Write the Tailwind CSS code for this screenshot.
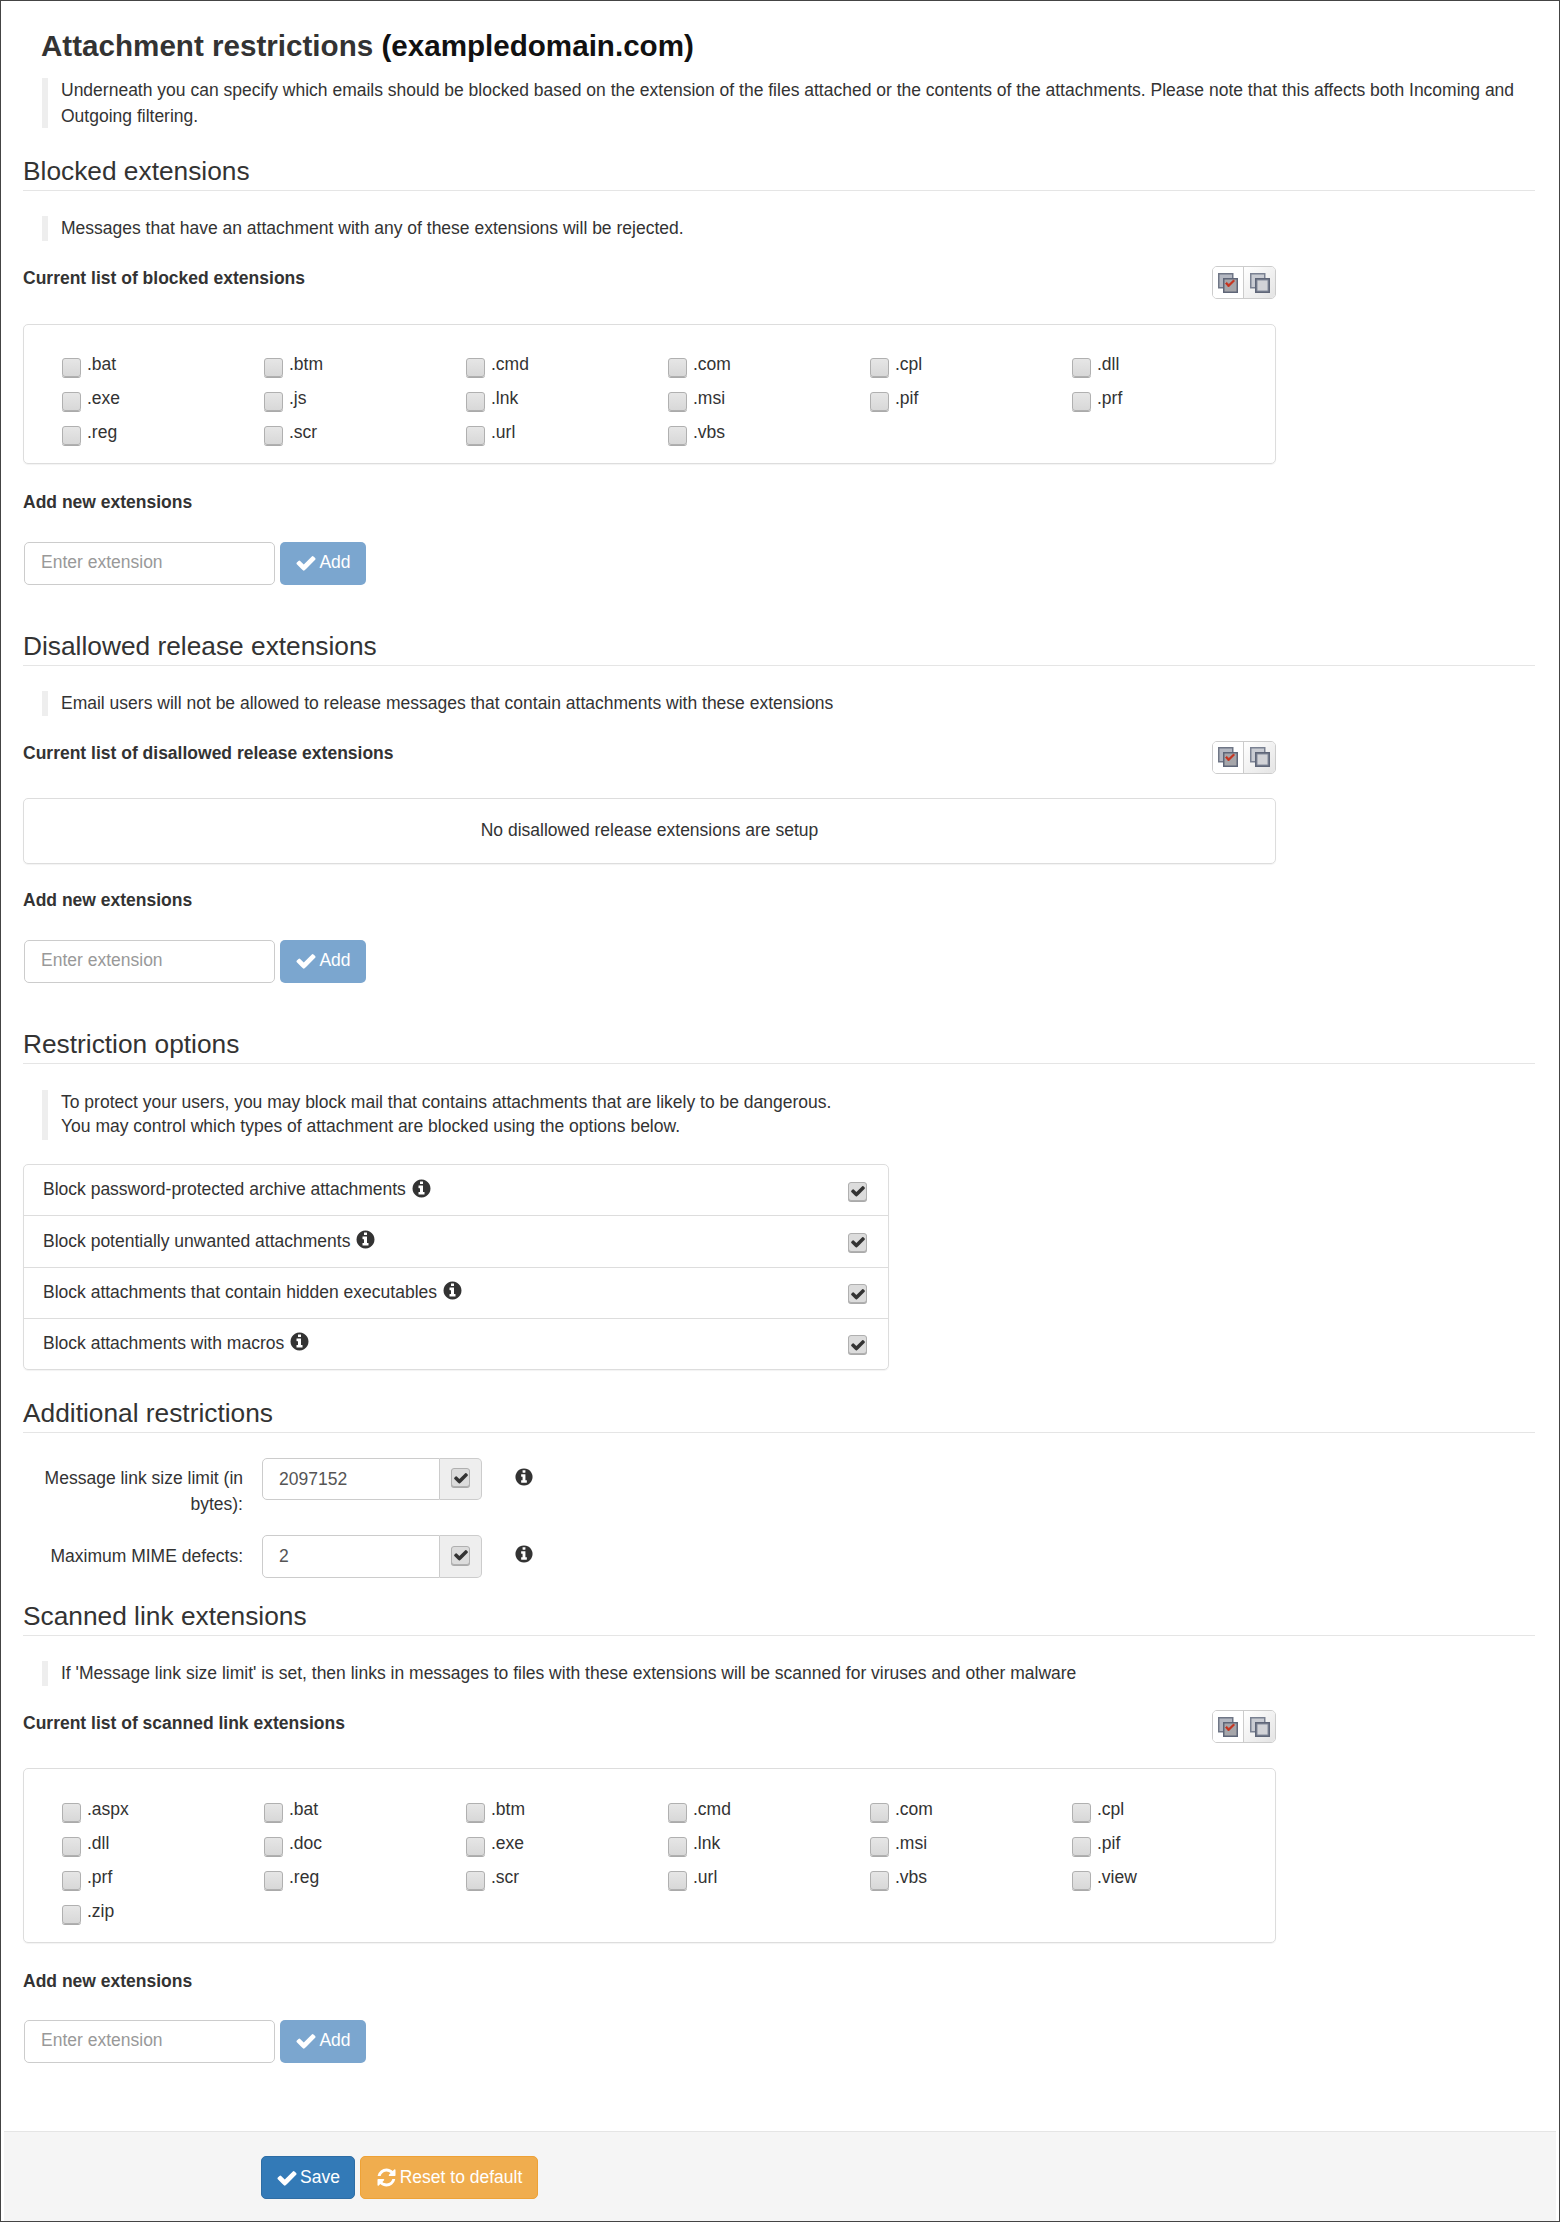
<!DOCTYPE html>
<html lang="en">
<head>
  <meta charset="UTF-8" />
  <title>Attachment restrictions</title>
  <script src="https://cdn.jsdelivr.net/npm/@tailwindcss/browser@4"></script>
</head>
<body class="bg-white">
  <div class="w-[1560px] h-[2222px] border border-[#444] flex flex-col font-['Liberation_Sans',Arial,sans-serif] text-[17.5px] leading-[25.5px] text-[#333]">
    <svg class="hidden">
      <symbol id="check" viewBox="0 0 1792 1792"><path fill="currentColor" d="M1671 566q0 40-28 68l-724 724-136 136q-28 28-68 28t-68-28l-136-136-362-362q-28-28-28-68t28-68l136-136q28-28 68-28t68 28l294 295 656-657q28-28 68-28t68 28l136 136q28 28 28 68z"/></symbol>
      <symbol id="info" viewBox="0 0 1792 1792"><path fill="currentColor" d="M1152 1376v-160q0-14-9-23t-23-9h-96v-512q0-14-9-23t-23-9h-320q-14 0-23 9t-9 23v160q0 14 9 23t23 9h96v320h-96q-14 0-23 9t-9 23v160q0 14 9 23t23 9h448q14 0 23-9t9-23zm-128-896v-160q0-14-9-23t-23-9h-192q-14 0-23 9t-9 23v160q0 14 9 23t23 9h192q14 0 23-9t9-23zm640 416q0 209-103 385.5t-279.5 279.5-385.5 103-385.5-103-279.5-279.5-103-385.5 103-385.5 279.5-279.5 385.5-103 385.5 103 279.5 279.5 103 385.5z"/></symbol>
      <symbol id="refresh" viewBox="0 0 1792 1792"><path fill="currentColor" d="M1639 1056q0 5-1 7-64 268-268 434.5t-478 166.5q-146 0-282.5-55t-243.5-157l-129 129q-19 19-45 19t-45-19-19-45v-448q0-26 19-45t45-19h448q26 0 45 19t19 45-19 45l-137 137q71 66 161 102t187 36q134 0 250-65t186-179q11-17 53-117 8-23 30-23h192q13 0 22.5 9.5t9.5 22.5zm25-800v448q0 26-19 45t-45 19h-448q-26 0-45-19t-19-45 19-45l138-138q-148-137-349-137-134 0-250 65t-186 179q-11 17-53 117-8 23-30 23h-199q-13 0-22.5-9.5t-9.5-22.5v-7q65-268 270-434.5t480-166.5q146 0 284 55.5t245 156.5l130-129q19-19 45-19t45 19 19 45z"/></symbol>
      <symbol id="select-all" viewBox="0 0 20 20">
        <rect x="0.75" y="0.75" width="14" height="14" fill="#b4b8c2" stroke="#6f7686" stroke-width="1.5"/>
        <rect x="5.75" y="5.75" width="13.5" height="13.5" fill="#a6a6aa" stroke="#5f6678" stroke-width="1.5"/>
        <path d="M7.5 10.5l3 3.5 6-6-1-1-4.6 4.4-2.2-2z" fill="#c8301a" stroke="#c8301a" stroke-width="0.8"/>
      </symbol>
      <symbol id="select-none" viewBox="0 0 20 20">
        <rect x="0.75" y="0.75" width="14" height="14" fill="#c9ccd3" stroke="#7a8192" stroke-width="1.5"/>
        <rect x="5.75" y="5.75" width="13.5" height="13.5" fill="#868d9d" stroke="#5f6678" stroke-width="1.5"/>
        <rect x="7.5" y="7.5" width="10" height="10" fill="#d2d3d7"/>
      </symbol>
    </svg>

    <div class="pl-[40px] pt-[25px] h-[40px] box-content text-[29.6px] leading-[40px] font-bold text-[#333]">Attachment restrictions <span class="text-[#111]">(exampledomain.com)</span></div>

    <div class="ml-[41px] mt-[12px] h-[50px] w-[1490px] border-l-[6px] border-[#eee] pl-[13px]">Underneath you can specify which emails should be blocked based on the extension of the files attached or the contents of the attachments. Please note that this affects both Incoming and Outgoing filtering.</div>

    <div class="ml-[22px] mt-[20px] w-[1512px] h-[43px] border-b border-[#e5e5e5] text-[26.3px] leading-[46px]">Blocked extensions</div>
    <div class="ml-[41px] mt-[25px] h-[25px] border-l-[6px] border-[#eee] pl-[13px]">Messages that have an attachment with any of these extensions will be rejected.</div>

    <div class="ml-[22px] mt-[25px] w-[1253px] h-[33px] flex justify-between">
      <div class="font-bold">Current list of blocked extensions</div>
      <div class="flex w-[64px] h-[33px] border border-[#ccc] rounded-[5px] overflow-hidden">
        <span class="w-[31px] flex items-center justify-center border-r border-[#ccc] bg-white"><svg class="w-[20px] h-[20px]"><use href="#select-all"/></svg></span>
        <span class="flex-1 flex items-center justify-center bg-gradient-to-br from-white to-[#e4e4e4]"><svg class="w-[20px] h-[20px]"><use href="#select-none"/></svg></span>
      </div>
    </div>

    <div data-exts=".bat .btm .cmd .com .cpl .dll .exe .js .lnk .msi .pif .prf .reg .scr .url .vbs" class="ext-list ml-[22px] mt-[25px] w-[1253px] h-[140px] border border-[#ddd] rounded-[5px] shadow-[0_1px_1px_rgba(0,0,0,0.05)] pt-[26px] pl-[38px] grid grid-cols-[repeat(6,202px)] auto-rows-[34px]"></div>

    <div class="ml-[22px] mt-[26px] font-bold">Add new extensions</div>
    <div class="ml-[23px] mt-[26px] flex gap-[5px]">
      <input class="w-[251px] h-[43px] border border-[#ccc] rounded-[5px] px-[16px] pb-[2px] placeholder:text-[#999]" placeholder="Enter extension" />
      <button class="w-[86px] h-[43px] rounded-[5px] bg-[#7ba6cf] text-white flex items-center justify-center gap-[2px] pb-[1px]"><svg class="w-[22px] h-[22px]"><use href="#check"/></svg>Add</button>
    </div>

    <div class="ml-[22px] mt-[38px] w-[1512px] h-[43px] border-b border-[#e5e5e5] text-[26.3px] leading-[46px]">Disallowed release extensions</div>
    <div class="ml-[41px] mt-[25px] h-[25px] border-l-[6px] border-[#eee] pl-[13px]">Email users will not be allowed to release messages that contain attachments with these extensions</div>

    <div class="ml-[22px] mt-[25px] w-[1253px] h-[33px] flex justify-between">
      <div class="font-bold">Current list of disallowed release extensions</div>
      <div class="flex w-[64px] h-[33px] border border-[#ccc] rounded-[5px] overflow-hidden">
        <span class="w-[31px] flex items-center justify-center border-r border-[#ccc] bg-white"><svg class="w-[20px] h-[20px]"><use href="#select-all"/></svg></span>
        <span class="flex-1 flex items-center justify-center bg-gradient-to-br from-white to-[#e4e4e4]"><svg class="w-[20px] h-[20px]"><use href="#select-none"/></svg></span>
      </div>
    </div>

    <div class="ml-[22px] mt-[24px] w-[1253px] h-[66px] border border-[#ddd] rounded-[5px] shadow-[0_1px_1px_rgba(0,0,0,0.05)] flex items-center justify-center">No disallowed release extensions are setup</div>

    <div class="ml-[22px] mt-[24px] font-bold">Add new extensions</div>
    <div class="ml-[23px] mt-[27px] flex gap-[5px]">
      <input class="w-[251px] h-[43px] border border-[#ccc] rounded-[5px] px-[16px] pb-[2px] placeholder:text-[#999]" placeholder="Enter extension" />
      <button class="w-[86px] h-[43px] rounded-[5px] bg-[#7ba6cf] text-white flex items-center justify-center gap-[2px] pb-[1px]"><svg class="w-[22px] h-[22px]"><use href="#check"/></svg>Add</button>
    </div>

    <div class="ml-[22px] mt-[38px] w-[1512px] h-[43px] border-b border-[#e5e5e5] text-[26.3px] leading-[46px]">Restriction options</div>
    <div class="ml-[41px] mt-[26px] h-[50px] border-l-[6px] border-[#eee] pl-[13px] leading-[24px]">To protect your users, you may block mail that contains attachments that are likely to be dangerous.<br />You may control which types of attachment are blocked using the options below.</div>

    <div class="ml-[22px] mt-[24px] w-[866px] h-[206px] border border-[#ddd] rounded-[5px] shadow-[0_1px_1px_rgba(0,0,0,0.05)] flex flex-col divide-y divide-[#ddd]">
      <div class="flex-1 flex items-center justify-between pl-[19px] pr-[21px]"><span class="flex items-center gap-[5px]"><span>Block password-protected archive attachments</span><svg class="w-[21px] h-[21px] mb-[4px] text-[#333]"><use href="#info"/></svg></span><span class="flex items-center justify-center mt-[2px] w-[19px] h-[19px] rounded-[3px] border border-[#b0b0b0] bg-[#dcdcdc] shadow-[0_1px_0_#aaa] text-[#333]"><svg class="w-[16px] h-[16px]"><use href="#check"/></svg></span></div>
      <div class="flex-1 flex items-center justify-between pl-[19px] pr-[21px]"><span class="flex items-center gap-[5px]"><span>Block potentially unwanted attachments</span><svg class="w-[21px] h-[21px] mb-[4px] text-[#333]"><use href="#info"/></svg></span><span class="flex items-center justify-center mt-[2px] w-[19px] h-[19px] rounded-[3px] border border-[#b0b0b0] bg-[#dcdcdc] shadow-[0_1px_0_#aaa] text-[#333]"><svg class="w-[16px] h-[16px]"><use href="#check"/></svg></span></div>
      <div class="flex-1 flex items-center justify-between pl-[19px] pr-[21px]"><span class="flex items-center gap-[5px]"><span>Block attachments that contain hidden executables</span><svg class="w-[21px] h-[21px] mb-[4px] text-[#333]"><use href="#info"/></svg></span><span class="flex items-center justify-center mt-[2px] w-[19px] h-[19px] rounded-[3px] border border-[#b0b0b0] bg-[#dcdcdc] shadow-[0_1px_0_#aaa] text-[#333]"><svg class="w-[16px] h-[16px]"><use href="#check"/></svg></span></div>
      <div class="flex-1 flex items-center justify-between pl-[19px] pr-[21px]"><span class="flex items-center gap-[5px]"><span>Block attachments with macros</span><svg class="w-[21px] h-[21px] mb-[4px] text-[#333]"><use href="#info"/></svg></span><span class="flex items-center justify-center mt-[2px] w-[19px] h-[19px] rounded-[3px] border border-[#b0b0b0] bg-[#dcdcdc] shadow-[0_1px_0_#aaa] text-[#333]"><svg class="w-[16px] h-[16px]"><use href="#check"/></svg></span></div>
    </div>

    <div class="ml-[22px] mt-[20px] w-[1512px] h-[43px] border-b border-[#e5e5e5] text-[26.3px] leading-[46px]">Additional restrictions</div>

    <div class="ml-[22px] mt-[25px] h-[77px] flex items-start">
      <div class="w-[220px] pt-[8px] text-right">Message link size limit (in bytes):</div>
      <div class="ml-[19px] w-[220px] h-[42px] flex">
        <input class="w-[178px] h-full border border-[#ccc] rounded-l-[5px] px-[16px] text-[#555]" value="2097152" />
        <span class="flex-1 flex items-center justify-center border border-l-0 border-[#ccc] rounded-r-[5px] bg-[#eee]"><span class="flex items-center justify-center mb-[3px] w-[19px] h-[19px] rounded-[3px] border border-[#b0b0b0] bg-[#dcdcdc] shadow-[0_1px_0_#aaa] text-[#333]"><svg class="w-[16px] h-[16px]"><use href="#check"/></svg></span></span>
      </div>
      <svg class="ml-[32px] mt-[9px] w-[20px] h-[20px] text-[#333]"><use href="#info"/></svg>
    </div>
    <div class="ml-[22px] h-[43px] flex items-start">
      <div class="w-[220px] pt-[9px] text-right">Maximum MIME defects:</div>
      <div class="ml-[19px] w-[220px] h-[43px] flex">
        <input class="w-[178px] h-full border border-[#ccc] rounded-l-[5px] px-[16px] text-[#555]" value="2" />
        <span class="flex-1 flex items-center justify-center border border-l-0 border-[#ccc] rounded-r-[5px] bg-[#eee]"><span class="flex items-center justify-center mb-[3px] w-[19px] h-[19px] rounded-[3px] border border-[#b0b0b0] bg-[#dcdcdc] shadow-[0_1px_0_#aaa] text-[#333]"><svg class="w-[16px] h-[16px]"><use href="#check"/></svg></span></span>
      </div>
      <svg class="ml-[32px] mt-[9px] w-[20px] h-[20px] text-[#333]"><use href="#info"/></svg>
    </div>

    <div class="ml-[22px] mt-[15px] w-[1512px] h-[43px] border-b border-[#e5e5e5] text-[26.3px] leading-[46px]">Scanned link extensions</div>
    <div class="ml-[41px] mt-[25px] h-[25px] border-l-[6px] border-[#eee] pl-[13px]">If 'Message link size limit' is set, then links in messages to files with these extensions will be scanned for viruses and other malware</div>

    <div class="ml-[22px] mt-[24px] w-[1253px] h-[33px] flex justify-between">
      <div class="font-bold pt-[1px]">Current list of scanned link extensions</div>
      <div class="flex w-[64px] h-[33px] border border-[#ccc] rounded-[5px] overflow-hidden">
        <span class="w-[31px] flex items-center justify-center border-r border-[#ccc] bg-white"><svg class="w-[20px] h-[20px]"><use href="#select-all"/></svg></span>
        <span class="flex-1 flex items-center justify-center bg-gradient-to-br from-white to-[#e4e4e4]"><svg class="w-[20px] h-[20px]"><use href="#select-none"/></svg></span>
      </div>
    </div>

    <div data-exts=".aspx .bat .btm .cmd .com .cpl .dll .doc .exe .lnk .msi .pif .prf .reg .scr .url .vbs .view .zip" class="ext-list ml-[22px] mt-[25px] w-[1253px] h-[175px] border border-[#ddd] rounded-[5px] shadow-[0_1px_1px_rgba(0,0,0,0.05)] pt-[27px] pl-[38px] grid grid-cols-[repeat(6,202px)] auto-rows-[34px]"></div>

    <div class="ml-[22px] mt-[26px] font-bold">Add new extensions</div>
    <div class="ml-[23px] mt-[25px] flex gap-[5px]">
      <input class="w-[251px] h-[43px] border border-[#ccc] rounded-[5px] px-[16px] pb-[2px] placeholder:text-[#999]" placeholder="Enter extension" />
      <button class="w-[86px] h-[43px] rounded-[5px] bg-[#7ba6cf] text-white flex items-center justify-center gap-[2px] pb-[1px]"><svg class="w-[22px] h-[22px]"><use href="#check"/></svg>Add</button>
    </div>

    <div class="mt-auto mx-[3px] h-[90px] border-t border-[#e5e5e5] bg-[#f5f5f5] pt-[24px] pl-[257px] flex items-start gap-[5px]">
      <button class="w-[94px] h-[43px] rounded-[5px] bg-[#337ab7] border border-[#2e6da4] text-white flex items-center justify-center gap-[2px]"><svg class="w-[22px] h-[22px]"><use href="#check"/></svg>Save</button>
      <button class="w-[178px] h-[43px] rounded-[5px] bg-[#f0ad4e] border border-[#eea236] text-white flex items-center justify-center gap-[3px]"><svg class="w-[21px] h-[21px]"><use href="#refresh"/></svg>Reset to default</button>
    </div>
  </div>

  <script>
    // fill the extension grids from their data-exts lists
    document.querySelectorAll(".ext-list").forEach((list) => {
      list.innerHTML = list.dataset.exts.split(" ").map((ext) =>
        `<label class="flex items-start gap-[6px]"><span class="mt-[7px] w-[19px] h-[19px] rounded-[3px] border border-[#b0b0b0] bg-gradient-to-b from-[#e6e6e6] to-[#d8d8d8] shadow-[0_1px_0_#aaa]"></span><span class="mt-[1px]">${ext}</span></label>`
      ).join("");
    });
  </script>
</body>
</html>
